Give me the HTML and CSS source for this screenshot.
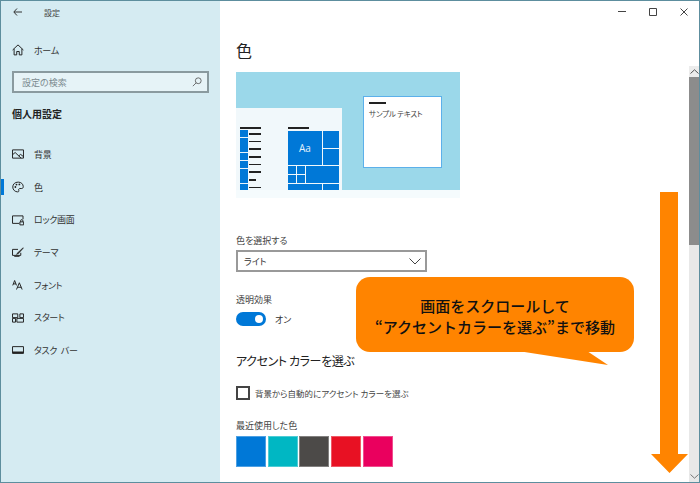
FILE: index.html
```html
<!DOCTYPE html>
<html lang="ja">
<head>
    <title>設定</title>
    <link rel="stylesheet" href="styles.css">
</head>
<body>
    <div class="window">
        <aside class="sidebar">
            <div class="titlebar">
                <svg class="back" width="9" height="8" viewBox="0 0 9 8"><path d="M4 .5.800 4 4 7.500M1 4h8" fill="none" stroke="#333" stroke-width="1"/></svg>
                <span>設定</span>
            </div>
            <div class="nav-item home">
                <svg width="12" height="12" viewBox="0 0 16 16"><path d="M.8 8 8 1.200 15.200 8M2.800 6.500V14.500H6.300V10H9.700V14.500H13.200V6.500" fill="none" stroke="#222" stroke-width="1.300"/></svg>
                <span>ホーム</span>
            </div>
            <div class="search">
                <span>設定の検索</span>
                <svg width="10" height="10" viewBox="0 0 12 12"><circle cx="7.500" cy="4.500" r="3.500" fill="none" stroke="#555"/><path d="M5 7 1 11" stroke="#555" fill="none"/></svg>
            </div>
            <h2 class="section">個人用設定</h2>
            <nav class="nav">
                <div class="nav-item">
                    <svg width="12" height="12" viewBox="0 0 16 16"><path d="M.700 2.500h14.600v11H.700zM.700 9l3.500-3 8 7.500M9 10.500l2.500-2 3.800 3" fill="none" stroke="#222" stroke-width="1.300"/></svg>
                    <span>背景</span>
                </div>
                <div class="nav-item active">
                    <svg width="12" height="12" viewBox="0 0 16 16"><path d="M8 1.500C4 1.500 1 4.300 1 8s3 6.500 6.500 6.500c1.500 0 2-1 1.500-2-.6-1.300.2-2.500 1.500-2.500h2.500c1.300 0 2-1 2-2.500 0-3.500-3-6-6.500-6z" fill="none" stroke="#222" stroke-width="1.300"/><circle cx="4.500" cy="8" r="1.200" fill="#222"/><circle cx="6" cy="4.800" r="1.200" fill="#222"/><circle cx="9.800" cy="4.500" r="1.200" fill="#222"/></svg>
                    <span>色</span>
                </div>
                <div class="nav-item">
                    <svg width="12" height="12" viewBox="0 0 16 16"><path d="M9.500 12.500H.700v-10h14V7M10.500 10.500h5v4h-5zM11.500 10.500V9a1.500 1.500 0 0 1 3 0v1.500" fill="none" stroke="#222" stroke-width="1.300"/></svg>
                    <span>ロック画面</span>
                </div>
                <div class="nav-item">
                    <svg width="12" height="12" viewBox="0 0 16 16"><path d="M8 4.500H.700v8h11V9" fill="none" stroke="#222" stroke-width="1.300"/><path d="M15 1.500 7 9 5 12l3.500-1.500L15.500 3z" fill="#333"/><path d="M3 12.500h7v2H3z" fill="#333"/></svg>
                    <span>テーマ</span>
                </div>
                <div class="nav-item">
                    <svg width="12" height="12" viewBox="0 0 16 16"><path d="M1 8.500 3.500 2 6 8.500M1.800 6.500h3.400M6 14 9.800 5l3.700 9M7.200 11h5.200" fill="none" stroke="#222" stroke-width="1.300"/></svg>
                    <span>フォント</span>
                </div>
                <div class="nav-item">
                    <svg width="12" height="12" viewBox="0 0 16 16"><path d="M.700 2.500h7v5h-7zM10.500 2.500h4.800v5h-4.800zM.700 8.500h4v5h-4zM6.500 8.500h8.800v5H6.500z" fill="none" stroke="#222" stroke-width="1.300"/></svg>
                    <span>スタート</span>
                </div>
                <div class="nav-item">
                    <svg width="12" height="12" viewBox="0 0 16 16"><path d="M.700 3.500h14.600v9H.700z" fill="none" stroke="#222" stroke-width="1.300"/><path d="M1 10h14v2.500H1z" fill="#222"/></svg>
                    <span>タスク バー</span>
                </div>
            </nav>
        </aside>
        <main class="content">
            <div class="controls">
                <svg width="8" height="8" viewBox="0 0 8 8"><path d="M0 3.500h8" stroke="#444" fill="none"/></svg>
                <svg width="8" height="8" viewBox="0 0 8 8"><path d="M.500.500h7v7h-7z" stroke="#444" fill="none"/></svg>
                <svg width="8" height="8" viewBox="0 0 8 8"><path d="M.500.500l7 7M7.500.500l-7 7" stroke="#444" fill="none"/></svg>
            </div>
            <div class="page">
                <h1>色</h1>
                <div class="preview">
                    <div class="preview-sky">
                        <div class="start-menu">
                            <div class="app-list">
                                <div class="list-head"></div>
                                <div class="list-rows">
                                    <i></i><i></i><i></i><i></i><i></i><i></i><i class="short"></i><i></i>
                                </div>
                            </div>
                            <div class="tiles">
                                <div class="list-head"></div>
                                <div class="tile-grid">
                                    <b class="t-big">Aa</b><b class="t-a"></b><b class="t-b"></b>
                                    <b class="t-c"></b><b class="t-d"></b><b class="t-e"></b><b class="t-f"></b><b class="t-g"></b>
                                    <b class="t-h"></b><b class="t-i"></b>
                                </div>
                            </div>
                        </div>
                        <div class="sample-window">
                            <div class="list-head"></div>
                            <p>サンプル テキスト</p>
                        </div>
                    </div>
                    <div class="preview-foot"></div>
                </div>
                <label class="field-label pick">色を選択する</label>
                <div class="select">
                    <span>ライト</span>
                    <svg width="12" height="7" viewBox="0 0 12 7"><path d="M.500.500 6 6 11.500.500" fill="none" stroke="#444"/></svg>
                </div>
                <label class="field-label clear">透明効果</label>
                <div class="toggle-row">
                    <span class="toggle"></span>
                    <span>オン</span>
                </div>
                <h3>アクセント カラーを選ぶ</h3>
                <div class="check-row">
                    <span class="checkbox"></span>
                    <span>背景から自動的にアクセント カラーを選ぶ</span>
                </div>
                <label class="field-label recent">最近使用した色</label>
                <div class="swatches">
                    <span class="swatch blue"></span>
                    <span class="swatch teal"></span>
                    <span class="swatch gray"></span>
                    <span class="swatch red"></span>
                    <span class="swatch pink"></span>
                </div>
            </div>
            <div class="scrollbar">
                <div class="scroll-up"><svg width="9" height="5" viewBox="0 0 9 5"><path d="M.500 4.500 4.500.800l4 3.700" fill="none" stroke="#555"/></svg></div>
                <div class="scroll-thumb"></div>
                <div class="scroll-down"><svg width="9" height="5" viewBox="0 0 9 5"><path d="M.500.500l4 3.700 4-3.700" fill="none" stroke="#777"/></svg></div>
            </div>
        </main>

        <!-- annotation on top of the screenshot -->
        <div class="callout">
            <p>画面をスクロールして</p>
            <p>“アクセントカラーを選ぶ”まで移動</p>
        </div>
        <svg class="callout-tail" width="91" height="15" viewBox="0 0 91 15"><path d="M0 0H69L90 14Z" fill="#ff8400"/></svg>
        <svg class="scroll-arrow" width="37" height="281" viewBox="0 0 37 281"><path d="M9 0H27V262H37L18.500 281 0 262H9Z" fill="#ff8400"/></svg>
    </div>
</body>
</html>
```

FILE: styles.css
```css
* {
    box-sizing: border-box;
}
html, body {
    margin: 0;
    height: 100%;
}
body {
    font-family: "Noto Sans CJK JP", "Noto Sans", sans-serif;
    font-feature-settings: "palt";
    color: #333;
    background-color: #fff;
    overflow: hidden;
}
.window {
    position: relative;
    display: flex;
    width: 700px;
    height: 483px;
    border: 1px solid #5d8e9e;
    overflow: hidden;
}

/* sidebar */
.sidebar {
    width: 219px;
    flex-shrink: 0;
    background-color: #d5ebf2;
    font-size: 9px;
}
.titlebar {
    display: flex;
    align-items: center;
    height: 22px;
    padding-left: 12px;
    font-size: 8px;
    color: #444;
}
.titlebar span {
    margin-left: 22px;
}
.nav-item {
    display: flex;
    align-items: center;
    height: 32.700px;
    padding-left: 11px;
    color: #333;
    letter-spacing: -0.3px;
    word-spacing: 2px;
}
.nav-item span {
    margin-left: 10px;
}
.nav-item.home {
    margin-top: 11px;
    height: 32px;
}
.nav-item.active {
    position: relative;
}
.nav-item.active::before {
    content: "";
    position: absolute;
    left: 0;
    top: 8px;
    width: 3px;
    height: 16px;
    background-color: #0078d7;
}
.search {
    display: flex;
    align-items: center;
    justify-content: space-between;
    margin: 5px 0 0 11px;
    width: 197px;
    height: 22px;
    padding: 0 5px 0 8px;
    border: 2px solid #8a9a9f;
    background-color: #e6f3f7;
    color: #7b8a8f;
}
.section {
    margin: 11px 0 0 11px;
    height: 20px;
    font-size: 10px;
    line-height: 20px;
    font-weight: 700;
    color: #222;
}
.nav {
    margin-top: 14px;
}

/* main area */
.content {
    position: relative;
    flex-grow: 1;
    background-color: #fff;
}
.controls {
    display: flex;
    justify-content: flex-end;
    align-items: center;
    gap: 23px;
    height: 22px;
    padding-right: 11px;
}
.page {
    padding: 13px 0 0 16px;
}
h1 {
    margin: 0;
    height: 29px;
    font-size: 16px;
    font-weight: 400;
    line-height: 29px;
    color: #222;
}
.preview {
    margin-top: 7px;
    width: 224px;
}
.preview-sky {
    position: relative;
    display: flex;
    height: 118px;
    background-color: #9bd8ea;
    overflow: hidden;
}
.preview-foot {
    height: 8px;
    background-color: #f5fbfd;
}
.start-menu {
    display: flex;
    align-self: flex-end;
    width: 106px;
    height: 82px;
    padding: 19px 4px 0 4px;
    background-color: #f1f8fb;
}
.app-list {
    width: 43px;
    flex-shrink: 0;
    margin-right: 5px;
}
.list-head {
    width: 21px;
    height: 2px;
    background-color: #222;
}
.list-rows {
    display: flex;
    flex-direction: column;
    margin-top: 1px;
    width: 8px;
    height: 60px;
    background-image: repeating-linear-gradient(to bottom, #0078d7 0, #0078d7 7px, #e8f3fa 7px, #e8f3fa 7.700px);
}
.list-rows i {
    display: block;
    flex-shrink: 0;
    width: 12px;
    height: 1.500px;
    margin: 3px 0 3.200px 9px;
    background-color: #222;
}
.list-rows i.short {
    width: 7px;
}
.tiles {
    flex-grow: 1;
}
.tile-grid {
    display: grid;
    grid-template-columns: 8px 8px 16px 16px;
    grid-template-rows: 17px 16px 8px 8px 8px;
    gap: 1px;
    margin-top: 2px;
    height: 60px;
    overflow: hidden;
}
.tile-grid b {
    background-color: #0078d7;
    display: block;
}
.tile-grid .t-big {
    grid-column: 1 / 4;
    grid-row: 1 / 3;
    display: flex;
    align-items: center;
    justify-content: center;
    color: #e4f1fb;
    font-family: "Open Sans", sans-serif;
    font-size: 10px;
    font-weight: 400;
}
.tile-grid .t-a {
    grid-column: 4;
    grid-row: 1;
}
.tile-grid .t-b {
    grid-column: 4;
    grid-row: 2;
}
.tile-grid .t-c {
    grid-column: 1;
    grid-row: 3;
}
.tile-grid .t-d {
    grid-column: 2;
    grid-row: 3;
}
.tile-grid .t-e {
    grid-column: 3 / 5;
    grid-row: 3 / 5;
}
.tile-grid .t-f {
    grid-column: 1;
    grid-row: 4;
}
.tile-grid .t-g {
    grid-column: 2;
    grid-row: 4;
}
.tile-grid .t-h {
    grid-column: 1 / 4;
    grid-row: 5;
}
.tile-grid .t-i {
    grid-column: 4;
    grid-row: 5;
}
.sample-window {
    position: absolute;
    left: 127px;
    top: 24px;
    width: 79px;
    height: 72px;
    padding: 5px 5px 0;
    background-color: #fff;
    border: 1px solid #5cb0ea;
}
.sample-window .list-head {
    width: 17px;
}
.sample-window p {
    margin: 3px 0 0;
    font-size: 7.500px;
    letter-spacing: -0.2px;
    line-height: 14px;
    white-space: nowrap;
    color: #444;
}

/* form fields */
.field-label {
    display: block;
    font-size: 9px;
    line-height: 14px;
    color: #444;
}
.pick {
    margin-top: 36px;
}
.select {
    display: flex;
    align-items: center;
    justify-content: space-between;
    margin-top: 2px;
    width: 191px;
    height: 22px;
    padding: 0 4px 0 6px;
    border: 2px solid #999;
    font-size: 9px;
}
.clear {
    margin-top: 21px;
}
.toggle-row {
    display: flex;
    align-items: center;
    gap: 9px;
    margin-top: 5px;
    font-size: 9px;
}
.toggle {
    position: relative;
    width: 30px;
    height: 14px;
    border-radius: 7px;
    background-color: #0078d7;
}
.toggle::after {
    content: "";
    position: absolute;
    right: 3px;
    top: 3px;
    width: 8px;
    height: 8px;
    border-radius: 50%;
    background-color: #fff;
}
h3 {
    margin: 25px 0 0;
    height: 20px;
    font-size: 12px;
    font-weight: 400;
    letter-spacing: -0.4px;
    line-height: 20px;
    color: #222;
}
.check-row {
    display: flex;
    align-items: center;
    gap: 5px;
    margin-top: 15px;
    height: 14px;
    font-size: 8.500px;
    color: #444;
}
.checkbox {
    width: 14px;
    height: 14px;
    border: 2px solid #444;
}
.recent {
    margin-top: 19px;
}
.swatches {
    display: flex;
    gap: 1.700px;
    margin-top: 3px;
}
.swatch {
    width: 30px;
    height: 31px;
    border: 1px solid rgba(255, 255, 255, 0.3);
}
.blue {
    background-color: #0078d7;
}
.teal {
    background-color: #00b7c3;
}
.gray {
    background-color: #4c4a48;
}
.red {
    background-color: #e81123;
}
.pink {
    background-color: #ea005e;
}

/* scrollbar */
.scrollbar {
    position: absolute;
    right: 0;
    top: 65px;
    bottom: 0;
    width: 10px;
    display: flex;
    flex-direction: column;
    background-color: #e8e8e8;
}
.scroll-up {
    display: flex;
    align-items: center;
    justify-content: center;
    height: 11px;
    background-color: #ececec;
}
.scroll-thumb {
    height: 168px;
    background-color: #8c8c8c;
}
.scroll-down {
    display: flex;
    align-items: center;
    justify-content: center;
    height: 12px;
    margin-top: auto;
}

/* annotations */
.callout {
    position: absolute;
    left: 355px;
    top: 276px;
    width: 278px;
    height: 75px;
    padding-top: 18px;
    border-radius: 14px;
    background-color: #ff8400;
    text-align: center;
    color: #111;
    font-feature-settings: normal;
    font-size: 15px;
    font-weight: 500;
    line-height: 21px;
}
.callout p {
    margin: 0;
}
.callout-tail {
    position: absolute;
    left: 517px;
    top: 350px;
}
.scroll-arrow {
    position: absolute;
    left: 650px;
    top: 191px;
}
```
